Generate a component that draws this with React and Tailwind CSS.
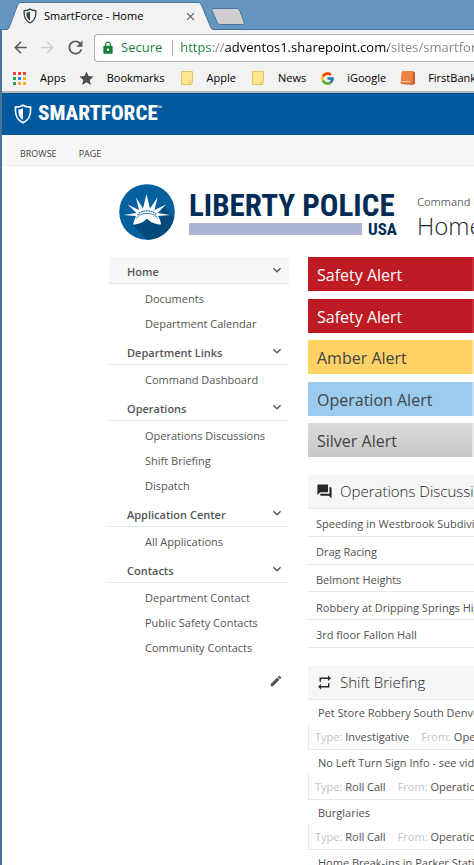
import { MdForum, MdRepeat, MdEdit, MdLock, MdArrowBack, MdArrowForward, MdRefresh, MdStar, MdClose, MdKeyboardArrowDown } from "react-icons/md";
import { FcGoogle } from "react-icons/fc";

const navGroups = [
  { title: "Home", active: true, items: ["Documents", "Department Calendar"] },
  { title: "Department Links", items: ["Command Dashboard"] },
  { title: "Operations", items: ["Operations Discussions", "Shift Briefing", "Dispatch"] },
  { title: "Application Center", items: ["All Applications"] },
  { title: "Contacts", items: ["Department Contact", "Public Safety Contacts", "Community Contacts"] },
];

const alerts = [
  { text: "Safety Alert", style: "bg-[#be1b25] border-[#c9303a] text-white" },
  { text: "Safety Alert", style: "bg-[#be1b25] border-[#c9303a] text-white" },
  { text: "Amber Alert", style: "bg-[#ffd265] border-[#ffe7a8] text-[#444444]" },
  { text: "Operation Alert", style: "bg-[#9bcbef] border-[#c3e0f6] text-[#444444]" },
  { text: "Silver Alert", style: "bg-linear-to-b from-[#dadada] to-[#c8c8c8] border-[#e8e8e8] text-[#444444]" },
];

const discussions = [
  "Speeding in Westbrook Subdivision",
  "Drag Racing",
  "Belmont Heights",
  "Robbery at Dripping Springs High",
  "3rd floor Fallon Hall",
];

const briefings = [
  { title: "Pet Store Robbery South Denver", type: "Investigative", from: "Operations" },
  { title: "No Left Turn Sign Info - see video", type: "Roll Call", from: "Operations" },
  { title: "Burglaries", type: "Roll Call", from: "Operations" },
  { title: "Home Break-ins in Parker Station", type: "Roll Call", from: "Operations" },
];

function Shield({ className }) {
  return (
    <svg viewBox="0 0 18 20" className={className} aria-hidden="true">
      <path d="M9 1.2C7 2.6 4.200 3.200 1.500 3.200C1 9.500 1.600 15.500 9 18.800C16.400 15.500 17 9.500 16.500 3.200C13.800 3.200 11 2.600 9 1.200Z" fill="none" stroke="currentColor" strokeWidth="1.700" />
      <path d="M9 4.200C7.600 5 6 5.400 4.400 5.500C4.300 10 5 13.500 9 15.800Z" fill="currentColor" />
    </svg>
  );
}

function FolderIcon() {
  return (
    <svg viewBox="0 0 12 14" className="h-3.5 w-3 shrink-0" aria-hidden="true">
      <path d="M.5.5h11v10l-1 3H.5z" fill="#ffe694" stroke="#e6c45c" />
      <path d="M8.500 13.500v-2.500l2-1.500" fill="none" stroke="#e6c45c" />
    </svg>
  );
}

function AppsIcon() {
  const colors = ["#ea4335", "#ea4335", "#ea4335", "#2e9e5b", "#2f7fe0", "#f6ae2d", "#2e9e5b", "#f6ae2d", "#f6ae2d"];
  return (
    <svg viewBox="0 0 13 13" className="size-[13px] shrink-0" aria-hidden="true">
      {colors.map((c, i) => (
        <rect key={i} x={(i % 3) * 5} y={Math.floor(i / 3) * 5} width="3" height="3" fill={c} />
      ))}
    </svg>
  );
}

function BankIcon() {
  return (
    <svg viewBox="0 0 16 16" className="size-4 shrink-0" aria-hidden="true">
      <path d="M2 1h11l2 1.500v11l-2 1.500L1 14z" fill="#c9602b" />
      <path d="M2 1h11l-.5 12.500H.5z" fill="#ef8440" />
      <path d="M2 11.500h8" stroke="#fbd0b0" />
    </svg>
  );
}

function CrownEmblem() {
  return (
    <svg viewBox="0 0 56 56" className="size-14 shrink-0" aria-hidden="true">
      <defs>
        <clipPath id="disc"><circle cx="28" cy="28" r="27.800" /></clipPath>
      </defs>
      <circle cx="28" cy="28" r="27.800" fill="#05609f" />
      <path d="M13 40L30 58H58V36L51 30L43 18L41 38L28 34Z" fill="#034b7c" clipPath="url(#disc)" />
      <path d="M14 40.500C15 37 16 34 17 32L4.500 31L17.500 29L8.500 20.500L20 26L17 13.500L24 24.500L27.500 10L31 24.500L38.500 13.500L35.500 26L47 20.500L38.500 29L51.500 31L39 32C40 34 42 37 42 40.500C36 40.500 31 38 28 34.500C25 38 20 40.500 14 40.500Z" fill="white" />
      <path d="M18.500 31C20 28.500 23.500 26.800 28 26.800S36 28.500 37.500 31" fill="none" stroke="#05609f" strokeWidth="1.200" strokeDasharray="1.600 .8" />
      <path d="M17.500 34.500C19 31 23 29.500 28 29.500S37 31 38.500 34.500" fill="none" stroke="#05609f" strokeWidth=".8" />
    </svg>
  );
}

function Browser() {
  return (
    <header className="shrink-0 whitespace-nowrap">
      <div className="flex h-[30px] items-end border-b border-[#48739c] bg-[#6596bf]">
        <div className="relative -mb-px ml-[7px] flex h-7 w-[206px] shrink-0 items-center pr-4 pl-4">
          <svg viewBox="0 0 206 28" className="absolute inset-0 size-full" aria-hidden="true">
            <path d="M0 28L2 26L11 2Q12 .5 14 .5H191Q193 .5 194 2L204 26L206 28Z" fill="#f2f2f2" />
            <path d="M0 27.500L2 26L11 2Q12 .5 14 .5H191Q193 .5 194 2L204 26L206 27.500" fill="none" stroke="#48739c" />
          </svg>
          <Shield className="relative h-4 w-[14px] text-[#37474f]" />
          <span className="relative ml-[7px] flex-1 text-[11px] text-black">SmartForce - Home</span>
          <button aria-label="Close tab" className="relative text-[#5a5a5a]"><MdClose size={13} /></button>
        </div>
        <button aria-label="New tab" className="mb-1 -ml-0.5">
          <svg viewBox="0 0 34 17" className="h-[17px] w-[34px]"><path d="M3 .5H26Q28 .5 28.500 2L33.500 15Q33 16.500 31.500 16.500H9Q7 16.500 6.500 15L.8 2Q.5 .5 3 .5Z" fill="#cfcfcf" stroke="#48739c" /></svg>
        </button>
      </div>
      <div className="border-l-2 border-[#48739c] bg-[#f2f2f2]">
        <div className="flex h-[35px] items-center pl-[9px]">
          <button aria-label="Back" className="text-[#5a5a5a]"><MdArrowBack size={19} /></button>
          <button aria-label="Forward" className="ml-2 text-[#cfcfcf]"><MdArrowForward size={19} /></button>
          <button aria-label="Reload" className="ml-2 text-[#5a5a5a]"><MdRefresh size={21} /></button>
          <div className="ml-2 flex h-7 min-w-0 flex-1 items-center rounded-l-sm border border-r-0 border-[#b0b0b0] bg-white pl-1.5 text-[13px]">
            <MdLock size={14} className="shrink-0 text-[#188038]" />
            <span className="ml-1.5 text-[#188038]">Secure</span>
            <span className="mr-[7px] ml-2.5 h-4 w-px shrink-0 bg-[#b5b5b5]" />
            <input
              aria-label="Address"
              defaultValue="https://adventos1.sharepoint.com/sites/smartforce"
              className="min-w-0 flex-1 bg-[linear-gradient(to_right,#188038_31px,#808080_31px,#808080_45px,#000000_45px,#000000_208px,#808080_208px)] bg-clip-text text-transparent outline-none"
            />
          </div>
        </div>
        <nav className="flex h-7 items-center overflow-hidden border-b-2 border-[#b5b5b5] pl-[11px] text-[11px] text-black">
          <a href="#apps" className="flex items-center gap-3.5"><AppsIcon />Apps</a>
          <a href="#bookmarks" className="ml-3 flex items-center gap-3"><MdStar size={17} className="text-[#4d4d4d]" />Bookmarks</a>
          <a href="#apple" className="ml-4 flex items-center gap-3.5"><FolderIcon />Apple</a>
          <a href="#news" className="ml-4 flex items-center gap-3.5"><FolderIcon />News</a>
          <a href="#igoogle" className="ml-3.5 flex items-center gap-3"><FcGoogle size={15} className="shrink-0" />iGoogle</a>
          <a href="#firstbank" className="ml-3.5 flex items-center gap-3"><BankIcon />FirstBank</a>
        </nav>
      </div>
    </header>
  );
}

function SideNav() {
  return (
    <nav className="w-[180px] shrink-0 text-[11px] text-[#555555]">
      {navGroups.map((g) => (
        <section key={g.title}>
          <button className={`flex h-[27px] w-full items-center justify-between border-b border-[#e5e5e5] pr-1 pl-[18px] font-semibold ${g.active ? "bg-[#f7f7f7]" : ""}`}>
            <span className="pt-1">{g.title}</span>
            <MdKeyboardArrowDown size={16} />
          </button>
          <ul className="py-0.5 pl-9">
            {g.items.map((i) => (
              <li key={i} className="leading-[25px]"><a href="#nav">{i}</a></li>
            ))}
          </ul>
        </section>
      ))}
      <div className="flex justify-end pt-3 pr-1.5">
        <button aria-label="Edit links"><MdEdit size={14} /></button>
      </div>
    </nav>
  );
}

function PanelTitle({ icon, children }) {
  return (
    <h2 className="flex h-[34px] items-center gap-[7px] border-b border-[#e8e8e8] bg-[#f6f6f6] pl-2 text-[15px] font-light text-[#262626]">
      {icon}
      {children}
    </h2>
  );
}

export default function App() {
  return (
    <div className="flex h-screen flex-col overflow-hidden bg-white font-['Open_Sans','Noto_Sans',sans-serif]">
      <Browser />
      <div className="flex-1 border-l-2 border-[#48739c]">
        <div className="flex h-[42px] items-center bg-[#00599c] pl-3 text-white">
          <Shield className="h-5 w-[18px]" />
          <span className="ml-1.5 font-['Roboto_Condensed','Liberation_Sans_Narrow',sans-serif] text-[21px] font-extrabold">SMARTFORCE</span>
          <span className="mb-3 text-[6px]">™</span>
        </div>
        <div className="flex h-[31px] items-center gap-[22px] border-b border-[#ececec] bg-[#f7f7f7] pt-2 pl-[18px] text-[9px] text-[#444444]">
          <button>BROWSE</button>
          <button>PAGE</button>
        </div>
        <div className="flex h-[91px] items-center overflow-hidden pl-[117px] whitespace-nowrap">
          <CrownEmblem />
          <div className="ml-3.5 w-52 shrink-0 pt-1 font-['Roboto_Condensed','Liberation_Sans_Narrow',sans-serif] font-bold text-[#022b55]">
            <div className="text-[31px] leading-[30px]">LIBERTY POLICE</div>
            <div className="flex items-center gap-1.5">
              <div className="h-3 flex-1 bg-[#adb3d5]" />
              <span className="text-[17px] leading-4">USA</span>
            </div>
          </div>
          <div className="ml-5 pt-3">
            <a href="#command" className="block text-[11px] leading-4 text-[#666666]">Command Dashboard</a>
            <h1 className="text-2xl font-light text-[#262626]">Home</h1>
          </div>
        </div>
        <div className="flex pl-[107px]">
          <SideNav />
          <main className="ml-[19px] min-w-0 flex-1 overflow-hidden text-[11px] whitespace-nowrap text-[#505050]">
            <div className="flex h-[200px] flex-col justify-between">
              {alerts.map((a, i) => (
                <div key={i} className={`flex h-[34px] items-center border-r-2 pt-0.5 pl-[9px] text-base ${a.style}`}>{a.text}</div>
              ))}
            </div>
            <section className="mt-[18px]">
              <PanelTitle icon={<MdForum size={17} className="shrink-0" />}>Operations Discussions</PanelTitle>
              <ul className="grid h-[139px] grid-rows-5">
                {discussions.map((d) => (
                  <li key={d} className="flex items-center border-b border-[#e8e8e8] pt-1 pl-2"><a href="#discussion">{d}</a></li>
                ))}
              </ul>
            </section>
            <section className="mt-[18px]">
              <PanelTitle icon={<MdRepeat size={17} className="shrink-0" />}>Shift Briefing</PanelTitle>
              {briefings.map((b) => (
                <article key={b.title}>
                  <h3 className="h-6 pl-2.5 leading-[26px]"><a href="#briefing">{b.title}</a></h3>
                  <p className="h-[26px] border-b border-l border-[#e8e8e8] pl-1.5 leading-[25px]">
                    <span className="text-[#c4c4c4]">Type:</span> {b.type}
                    <span className="ml-3 text-[#c4c4c4]">From:</span> {b.from}
                  </p>
                </article>
              ))}
            </section>
          </main>
        </div>
      </div>
    </div>
  );
}
